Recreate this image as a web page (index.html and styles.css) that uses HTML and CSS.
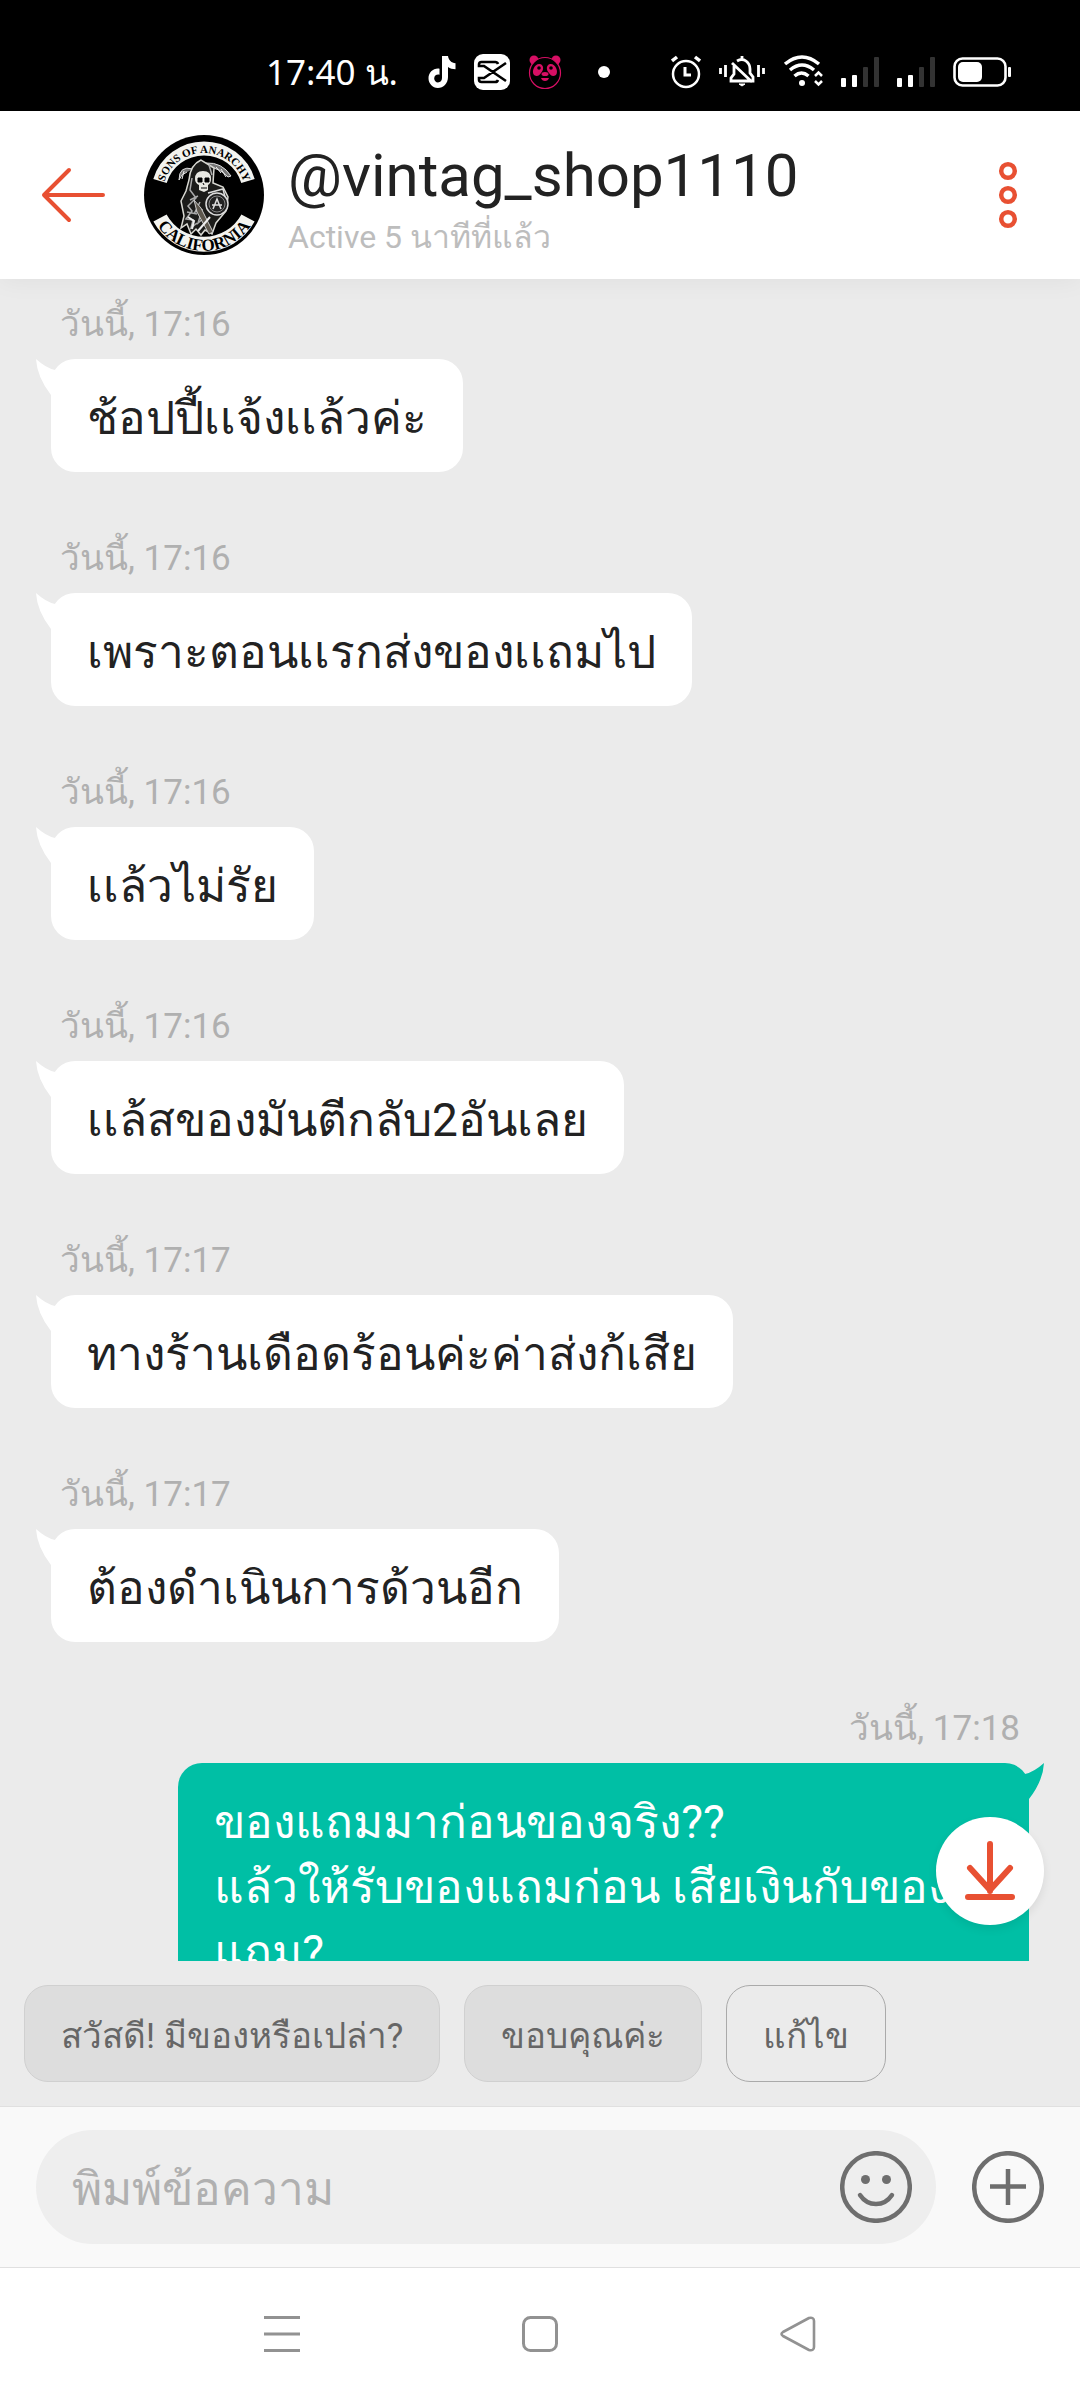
FILE: index.html
```html
<!DOCTYPE html>
<html lang="th">
<head>
    <meta charset="UTF-8">
    <meta name="viewport" content="width=device-width, initial-scale=1.0">
    <title>@vintag_shop1110</title>
    <link rel="stylesheet" href="styles.css">
</head>
<body>
    <div class="status-bar">
        <span class="clock">17:40 น.</span>
        <div class="status-apps">
            <svg width="28" height="34" viewBox="0 0 28 34">
                <path fill="#fff" d="M14 1h6c.5 4 3.500 7 7.500 7.300v6c-3 0-5.500-1-7.500-2.300V22c0 6.500-4.600 11-10.200 11C4.500 33 .5 28.500.5 23.300c0-6 5-10.500 11-9.600v6c-3-.7-5.300 1.200-5.300 3.700 0 2.300 1.700 4 3.800 4 2.400 0 4-1.700 4-4.400z"/>
            </svg>
            <svg width="36" height="36" viewBox="0 0 36 36">
                <rect width="36" height="36" rx="9" fill="#fff"/>
                <path fill="none" stroke="#000" stroke-width="2.600" d="M32 9 10 24H5v1.500a2.500 2.500 0 0 0 2.500 2.500H21a3 3 0 0 0 3-2M32 27 10 12H5v-1.500A2.500 2.500 0 0 1 7.500 8H21a3 3 0 0 1 3 2"/>
            </svg>
            <svg width="34" height="36" viewBox="0 0 34 36">
                <circle cx="6" cy="6" r="4.500" fill="#d70f64"/>
                <circle cx="28" cy="6" r="4.500" fill="#d70f64"/>
                <circle cx="17" cy="19" r="15.500" fill="#000" stroke="#d70f64" stroke-width="1.200"/>
                <g fill="#d70f64">
                    <path d="M12 10c4 1 4 6 1 9-2 3-4 4-7 2-3-4 1-12 6-11zM22 10c-4 1-4 6-1 9 2 3 4 4 7 2 3-4-1-12-6-11z"/>
                    <ellipse cx="17" cy="20" rx="3.500" ry="2"/>
                    <path d="M13 24h8q-1 3-4 3t-4-3z"/>
                </g>
                <circle cx="11" cy="14" r="1.800"/>
                <circle cx="23" cy="14" r="1.800"/>
            </svg>
            <span class="dot"></span>
        </div>
        <div class="status-system">
            <svg width="30" height="34" viewBox="0 0 30 34" fill="none" stroke="#fff" stroke-width="2.500">
                <circle cx="15" cy="19" r="13"/>
                <path d="M14 12v8h6" stroke-width="3"/>
                <path d="M1 6l5-4M29 6l-5-4" stroke-width="3.500"/>
            </svg>
            <svg width="46" height="34" viewBox="0 0 46 34" fill="none" stroke="#fff" stroke-width="2.800">
                <path d="M1.500 13v6M6.500 10v12M39.500 10v12M44.500 13v6"/>
                <path d="M23 1v3M18 6q5-3 9 0 4 3 4 8v4l3 4v4H12v-3l3-4v-8M13 8l20 19"/>
                <path d="M20 29h6l-3 2z" fill="#fff" stroke-width="1"/>
            </svg>
            <svg width="40" height="34" viewBox="0 0 40 34" fill="none" stroke="#fff" stroke-width="3.500">
                <path d="M2 9q17-14 34 0M7 15q12-10 24 0M11.500 21q7-6 14 0"/>
                <circle cx="19" cy="28" r="3" fill="#fff" stroke="none"/>
                <path d="M32 21l3.500-3.500L39 21M32 26l3.500 3.500L39 26" stroke-width="2.500"/>
            </svg>
            <svg width="38" height="32" viewBox="0 0 38 32" fill="#fff">
                <rect x="0" y="22" width="5" height="9" rx="1"/>
                <rect x="11" y="19" width="5" height="12" rx="1"/>
                <rect x="22" y="11" width="5" height="20" rx="1" fill="#333"/>
                <rect x="33" y="1" width="5" height="30" rx="1" fill="#333"/>
            </svg>
            <svg width="38" height="32" viewBox="0 0 38 32" fill="#fff">
                <rect x="0" y="22" width="5" height="9" rx="1"/>
                <rect x="11" y="19" width="5" height="12" rx="1"/>
                <rect x="22" y="11" width="5" height="20" rx="1" fill="#333"/>
                <rect x="33" y="1" width="5" height="30" rx="1" fill="#333"/>
            </svg>
            <svg width="58" height="32" viewBox="0 0 58 32">
                <rect x="1.500" y="2.500" width="51" height="27" rx="8" fill="none" stroke="#fff" stroke-width="2.600"/>
                <rect x="5" y="6" width="24" height="20" rx="5" fill="#fff"/>
                <rect x="55" y="11" width="3" height="10" rx="1" fill="#fff"/>
            </svg>
        </div>
    </div>

    <header class="chat-header">
        <button class="icon-btn" aria-label="Back">
            <svg width="66" height="60" viewBox="0 0 66 60" fill="none" stroke="#e85032" stroke-width="4" stroke-linecap="round" stroke-linejoin="round">
                <path d="M63 30H4M29 5 4 30l25 25"/>
            </svg>
        </button>
        <svg class="avatar" width="120" height="120" viewBox="0 0 120 120" role="img" aria-label="Sons of Anarchy California">
            <defs>
                <path id="arc-top" d="M19 53A41.500 41.500 0 0 1 101 53"/>
                <path id="arc-bottom" d="M10 85A56 56 0 0 0 110 85"/>
            </defs>
            <circle cx="60" cy="60" r="60" fill="#000"/>
            <path d="M16 46A46 46 0 0 1 104 46" fill="none" stroke="#f4f4f0" stroke-width="14"/>
            <path d="M16 83A50 50 0 0 0 104 83" fill="none" stroke="#f4f4f0" stroke-width="15"/>
            <text class="patch-text"><textPath href="#arc-top" startOffset="50%" text-anchor="middle">SONS OF ANARCHY</textPath></text>
            <text class="patch-text patch-text-lg"><textPath href="#arc-bottom" startOffset="50%" text-anchor="middle">CALIFORNIA</textPath></text>
            <!-- scythe -->
            <path d="M49 34q-14-4-14 11 2-6 8-8M62 28q16-1 25 13l-3 1q-8-9-20-10" fill="#777" stroke="#ddd" stroke-width="1"/>
            <path d="M77 34l5 8M72 32l5 6M40 36l-2 8" stroke="#eee" stroke-width="1"/>
            <!-- hood and robe -->
            <path d="M57 25q-11 5-12 20l-3 11-5 10 3 15-3 12 6-4 4 10 5-5 5 6 4-5 7 4 4-11 10-12 2-14-5-10-10-4 1-15z" fill="#1c1c1a" stroke="#d8d8d2" stroke-width="1.500"/>
            <path d="M48 43l-2 12 6 8-8 8 4 5-6 8 7 1-2 8 6-5M56 67l-5 10 7-2-4 13 6-5M46 65l8-4M43 77l10 2M65 30l3 10" fill="none" stroke="#aaa" stroke-width="1.500"/>
            <!-- skull -->
            <path d="M51 44q0-8 8-8t8 8q0 4-3 6v5l-4 2-5-2v-5q-4-2-4-6z" fill="#e8e8e2"/>
            <path d="M54 43h4v4h-4zM61 43h4v4h-4zM59 48l1 2M57 53h6" fill="#000" stroke="#000"/>
            <!-- crystal ball and rifle -->
            <circle cx="73" cy="69" r="11" fill="#222" stroke="#ddd" stroke-width="1.500"/>
            <circle cx="73" cy="69" r="8" fill="none" stroke="#888"/>
            <path d="M69 74l4-10 4 10M68 70h10M64 58l15-4 2 8" fill="none" stroke="#ddd" stroke-width="1.500"/>
            <path d="M50 65l7 8 12 24-4 2-12-22z" fill="#5d574d" stroke="#ccc"/>
            <path d="M44 82l6 4-2 8M66 82l-12 14" fill="none" stroke="#eee" stroke-width="2"/>
        </svg>
        <div class="peer">
            <h1 class="peer-name">@vintag_shop1110</h1>
            <p class="peer-status">Active 5 นาทีที่แล้ว</p>
        </div>
        <button class="icon-btn" aria-label="More">
            <svg width="24" height="72" viewBox="0 0 24 72" fill="none" stroke="#e85032" stroke-width="4.500">
                <circle cx="12" cy="12" r="6.800"/>
                <circle cx="12" cy="36" r="6.800"/>
                <circle cx="12" cy="60" r="6.800"/>
            </svg>
        </button>
    </header>

    <div class="chat">
        <main class="messages">
            <div class="message">
                <time class="message-time">วันนี้, 17:16</time>
                <p class="bubble">ช้อปปี้เเจ้งเเล้วค่ะ</p>
            </div>
            <div class="message">
                <time class="message-time">วันนี้, 17:16</time>
                <p class="bubble">เพราะตอนเเรกส่งของเเถมไป</p>
            </div>
            <div class="message">
                <time class="message-time">วันนี้, 17:16</time>
                <p class="bubble">เเล้วไม่รัย</p>
            </div>
            <div class="message">
                <time class="message-time">วันนี้, 17:16</time>
                <p class="bubble">เเล้สของมันตีกลับ2อันเลย</p>
            </div>
            <div class="message">
                <time class="message-time">วันนี้, 17:17</time>
                <p class="bubble">ทางร้านเดือดร้อนค่ะค่าส่งก้เสีย</p>
            </div>
            <div class="message">
                <time class="message-time">วันนี้, 17:17</time>
                <p class="bubble">ต้องดำเนินการด้วนอีก</p>
            </div>
            <div class="message sent">
                <time class="message-time">วันนี้, 17:18</time>
                <p class="bubble">ของแถมมาก่อนของจริง??<br>แล้วให้รับของแถมก่อน เสียเงินกับของแถม?</p>
            </div>
        </main>
        <button class="jump" aria-label="Latest messages">
            <svg width="54" height="64" viewBox="0 0 54 64" fill="none" stroke="#e85032" stroke-width="6" stroke-linecap="round" stroke-linejoin="round">
                <path d="M27 5v47M7 29l20 22 20-22M5 58h44"/>
            </svg>
        </button>
    </div>

    <div class="quick-replies">
        <button class="chip">สวัสดี! มีของหรือเปล่า?</button>
        <button class="chip">ขอบคุณค่ะ</button>
        <button class="chip chip-edit">แก้ไข</button>
    </div>

    <form class="composer">
        <div class="field">
            <input type="text" class="field-input" placeholder="พิมพ์ข้อความ" aria-label="พิมพ์ข้อความ">
            <button type="button" class="icon-btn" aria-label="Emoji">
                <svg width="72" height="72" viewBox="0 0 72 72" fill="none" stroke="#6e6e6e" stroke-width="4.500">
                    <circle cx="36" cy="36" r="33.800"/>
                    <circle cx="25.500" cy="28.500" r="4.500" fill="#6e6e6e" stroke="none"/>
                    <circle cx="46.500" cy="28.500" r="4.500" fill="#6e6e6e" stroke="none"/>
                    <path d="M20 44q6 9 16 9t16-9" stroke-linecap="round"/>
                </svg>
            </button>
        </div>
        <button type="button" class="icon-btn" aria-label="Attach">
            <svg width="72" height="72" viewBox="0 0 72 72" fill="none" stroke="#6e6e6e" stroke-width="4.500">
                <circle cx="36" cy="36" r="33.800"/>
                <path d="M36 18v36M18 35.500h36"/>
            </svg>
        </button>
    </form>

    <nav class="system-nav">
        <button class="icon-btn" aria-label="Recents">
            <svg width="36" height="36" viewBox="0 0 36 36" stroke="#929292" stroke-width="3">
                <path d="M0 1.500h36M0 18h36M0 34.500h36"/>
            </svg>
        </button>
        <button class="icon-btn" aria-label="Home">
            <svg width="36" height="36" viewBox="0 0 36 36" fill="none" stroke="#929292" stroke-width="3">
                <rect x="1.500" y="1.500" width="33" height="33" rx="7"/>
            </svg>
        </button>
        <button class="icon-btn" aria-label="Back">
            <svg width="36" height="36" viewBox="0 0 36 36" fill="none" stroke="#929292" stroke-width="2.600" stroke-linejoin="round">
                <path d="M3 16 29 2q5-1 5 3v26q0 4-5 3L3 20q-3-2 0-4z"/>
            </svg>
        </button>
    </nav>
</body>
</html>
```

FILE: styles.css
```css
* {
    box-sizing: border-box;
}

body {
    display: flex;
    flex-direction: column;
    height: 100vh;
    margin: 0;
    background: #ebebeb;
    color: #222;
    font-family: Roboto, "Noto Sans", sans-serif;
}

h1,
p {
    margin: 0;
    font-weight: 400;
}

button,
input {
    border: 0;
    padding: 0;
    background: none;
    color: inherit;
    font-family: inherit;
}

svg {
    display: block;
    flex: none;
}

.icon-btn {
    flex: none;
}

/* Status bar */
.status-bar {
    display: flex;
    align-items: center;
    height: 111px;
    padding: 33px 69px 0 266px;
    background: #000;
    color: #fff;
}

.clock {
    font-family: "Noto Sans", Roboto, sans-serif;
    font-size: 35px;
    line-height: 44px;
    white-space: nowrap;
}

.status-apps,
.status-system {
    display: flex;
    align-items: center;
}

.status-apps {
    gap: 18px;
    margin-left: 30px;
}

.dot {
    width: 12px;
    height: 12px;
    margin-left: 18px;
    border-radius: 50%;
    background: #fff;
}

.status-system {
    gap: 18px;
    margin-left: auto;
}

/* Header */
.chat-header {
    display: flex;
    align-items: center;
    position: relative;
    height: 168px;
    padding: 0 60px 0 40px;
    background: #fff;
    box-shadow: 0 2px 24px rgba(0, 0, 0, 0.05);
}

.avatar {
    margin: 0 24px 0 38px;
}

.patch-text {
    font-family: "Liberation Serif", serif;
    font-size: 11px;
    font-weight: 700;
}

.patch-text-lg {
    font-size: 17px;
}

.peer {
    flex: 1;
    padding-top: 12px;
}

.peer-name {
    font-size: 60px;
    line-height: 72px;
}

.peer-status {
    font-size: 32px;
    line-height: 50px;
    color: #bdbdbd;
}

/* Messages */
.chat {
    flex: 1;
    position: relative;
    min-height: 0;
}

.messages {
    height: 100%;
    padding: 22px 51px 0;
    overflow: hidden;
}

.message {
    display: flex;
    flex-direction: column;
    align-items: flex-start;
    margin-bottom: 63px;
}

.message-time {
    margin: 0 9px 10px;
    font-size: 35px;
    line-height: 48px;
    color: #b0b0b0;
}

.bubble {
    position: relative;
    max-width: 87%;
    padding: 27px 36px 21px;
    border-radius: 24px;
    background: #fff;
    font-size: 46px;
    line-height: 65px;
}

.bubble::before {
    content: "";
    position: absolute;
    top: 0;
    left: -15px;
    width: 20px;
    height: 36px;
    background: inherit;
    clip-path: path("M0 0Q10 9 19 11V36H15Q1 18 0 0Z");
}

.sent {
    align-items: flex-end;
}

.sent .bubble {
    background: #00bfa5;
    color: #fff;
}

.sent .bubble::before {
    left: auto;
    right: -15px;
    transform: scaleX(-1);
}

.jump {
    display: flex;
    align-items: center;
    justify-content: center;
    position: absolute;
    right: 36px;
    bottom: 36px;
    width: 108px;
    height: 108px;
    border-radius: 50%;
    background: #fff;
    box-shadow: 0 4px 10px rgba(0, 0, 0, 0.08);
}

/* Quick replies */
.quick-replies {
    display: flex;
    gap: 24px;
    padding: 24px;
}

.chip {
    height: 97px;
    padding: 4px 36px 0;
    border: 1px solid #d0d0d0;
    border-radius: 24px;
    background: #ddd;
    color: #666;
    font-size: 35px;
    white-space: nowrap;
}

.chip-edit {
    border-color: #aaa;
    background: none;
}

/* Composer */
.composer {
    display: flex;
    align-items: center;
    gap: 36px;
    height: 161px;
    padding: 0 36px;
    border-top: 1px solid #e0e0e0;
    background: #f9f9f9;
}

.field {
    display: flex;
    align-items: center;
    flex: 1;
    height: 114px;
    padding: 0 24px 0 36px;
    border-radius: 57px;
    background: #eee;
}

.field-input {
    flex: 1;
    min-width: 0;
    height: 100%;
    padding-top: 4px;
    outline: none;
    font-size: 46px;
}

.field-input::placeholder {
    color: #b0b0b0;
    opacity: 1;
}

/* System navigation */
.system-nav {
    display: flex;
    align-items: center;
    justify-content: center;
    gap: 222px;
    height: 133px;
    border-top: 1px solid #e0e0e0;
    background: #fff;
}
```
